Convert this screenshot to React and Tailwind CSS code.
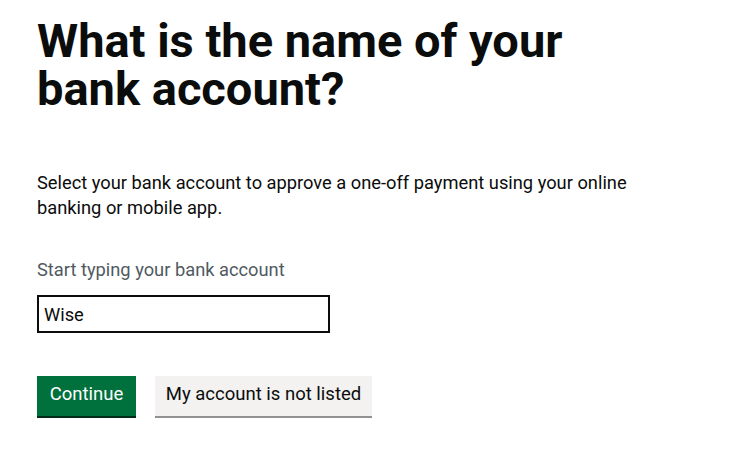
export default function App() {
  return (
    <div className="min-h-screen bg-white px-[37px] pt-[17px] text-[#0b0c0c]" style={{ fontFamily: 'Roboto, Arial, sans-serif' }}>
      <h1 className="text-[47px] font-bold leading-[48px]">
        What is the name of your
        <br />
        bank account?
      </h1>
      <p className="mt-[57px] max-w-[620px] text-[18.3px] leading-[25px]">
        Select your bank account to approve a one-off payment using your online banking or mobile app.
      </p>
      <label className="mt-[37px] block text-[18.3px] leading-[25px] text-[#505a5f]">Start typing your bank account</label>
      <input
        defaultValue="Wise"
        className="mt-[13px] block h-[38px] w-[293px] border-2 border-[#0b0c0c] px-[5px] text-[18.3px] outline-none"
      />
      <div className="mt-[43px] flex gap-[19px]">
        <button className="h-[40px] w-[99px] bg-[#00703c] pb-[2px] text-[18.5px] text-white shadow-[0_2px_0_#002d18]">Continue</button>
        <button className="h-[40px] w-[217px] bg-[#f3f2f1] pb-[2px] text-[18.5px] text-[#0b0c0c] shadow-[0_2px_0_#929191]">My account is not listed</button>
      </div>
    </div>
  );
}
